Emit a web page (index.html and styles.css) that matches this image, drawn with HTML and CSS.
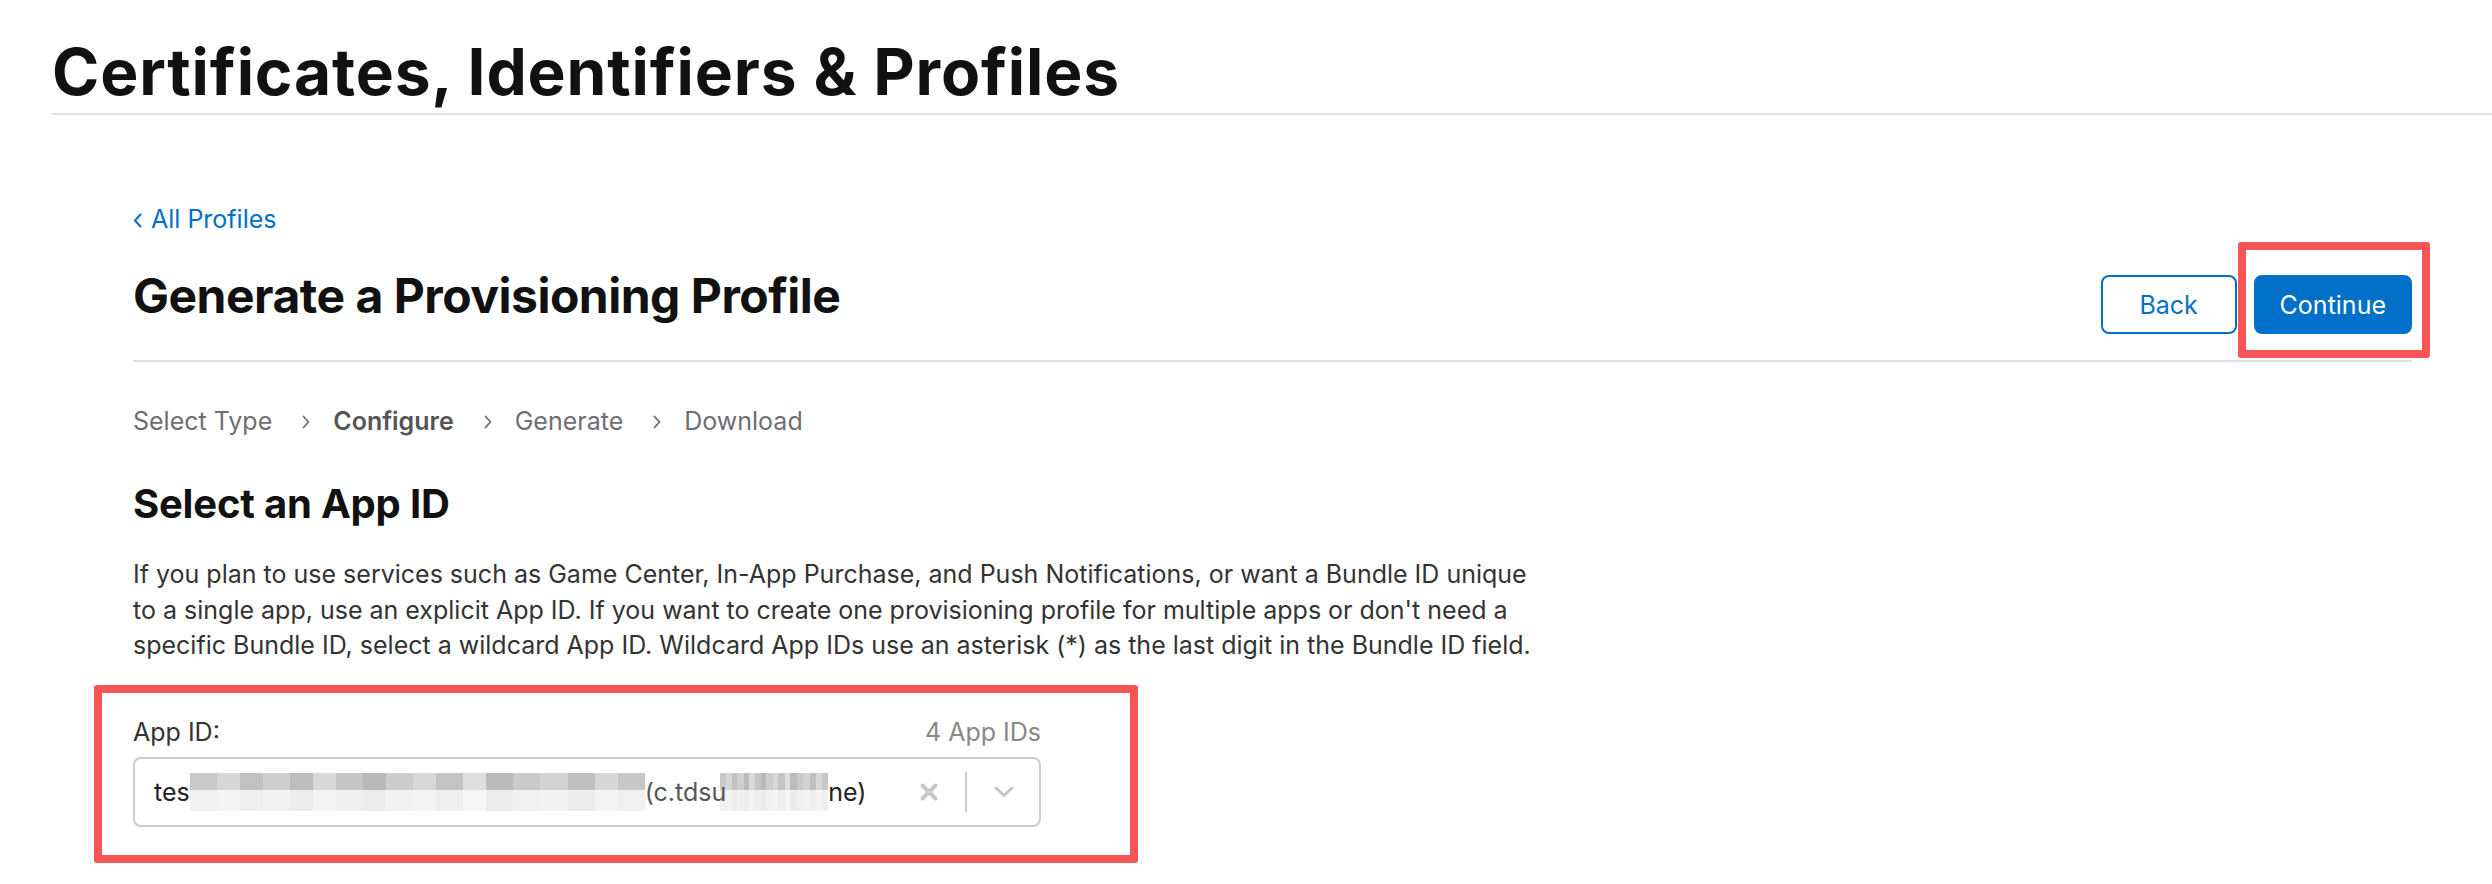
FILE: index.html
```html
<!DOCTYPE html>
<html lang="en">
<head>
<meta charset="utf-8">
<title>Certificates, Identifiers &amp; Profiles</title>
<link rel="stylesheet" href="styles.css">
</head>
<body>
<header class="site-header">
  <h1 class="site-title">Certificates, Identifiers &amp; Profiles</h1>
</header>
<main class="content">
  <a class="back-link" href="#">
    <svg class="back-chevron" width="9" height="15" viewBox="0 0 9 15"><path d="M7.5 1.5 L2 7.5 L7.5 13.5" fill="none" stroke="#0070c9" stroke-width="2" stroke-linecap="round" stroke-linejoin="round"/></svg>
    <span>All Profiles</span>
  </a>
  <div class="page-head">
    <h2 class="page-title">Generate a Provisioning Profile</h2>
    <div class="actions">
      <button class="btn btn-secondary">Back</button>
      <button class="btn btn-primary annotated">Continue</button>
    </div>
  </div>
  <ol class="steps">
    <li class="step">Select Type</li>
    <li class="step-sep"><svg width="8" height="14" viewBox="0 0 8 14"><path d="M1.5 1.5 L6.5 7 L1.5 12.5" fill="none" stroke="#6e6e73" stroke-width="1.8" stroke-linecap="round" stroke-linejoin="round"/></svg></li>
    <li class="step step-current">Configure</li>
    <li class="step-sep"><svg width="8" height="14" viewBox="0 0 8 14"><path d="M1.5 1.5 L6.5 7 L1.5 12.5" fill="none" stroke="#6e6e73" stroke-width="1.8" stroke-linecap="round" stroke-linejoin="round"/></svg></li>
    <li class="step">Generate</li>
    <li class="step-sep"><svg width="8" height="14" viewBox="0 0 8 14"><path d="M1.5 1.5 L6.5 7 L1.5 12.5" fill="none" stroke="#6e6e73" stroke-width="1.8" stroke-linecap="round" stroke-linejoin="round"/></svg></li>
    <li class="step">Download</li>
  </ol>
  <h3 class="section-title">Select an App ID</h3>
  <p class="section-desc">If you plan to use services such as Game Center, In-App Purchase, and Push Notifications, or want a Bundle ID unique to a single app, use an explicit App ID. If you want to create one provisioning profile for multiple apps or don't need a specific Bundle ID, select a wildcard App ID. Wildcard App IDs use an asterisk (*) as the last digit in the Bundle ID field.</p>
  <div class="field annotated-box">
    <div class="field-head">
      <label class="field-label">App ID:</label>
      <span class="field-count">4 App IDs</span>
    </div>
    <div class="select">
      <div class="select-value">tes<span class="mosaic mosaic-long"></span><span class="faded">(c.tdsu</span><span class="mosaic mosaic-short"></span>ne)</div>
      <svg class="select-clear" width="20" height="20" viewBox="0 0 20 20"><path d="M3.5 3.5 L16.5 16.5 M16.5 3.5 L3.5 16.5" fill="none" stroke="#c7c7c7" stroke-width="4" stroke-linecap="round"/></svg>
      <span class="select-divider"></span>
      <svg class="select-arrow" width="22" height="13" viewBox="0 0 22 13"><path d="M3 3 L11 10.5 L19 3" fill="none" stroke="#c7c7c7" stroke-width="3" stroke-linecap="round" stroke-linejoin="round"/></svg>
    </div>
  </div>
</main>
</body>
</html>
```
FILE: styles.css
```css
* { box-sizing: border-box; }
html, body { margin: 0; padding: 0; background: #fff; }
body {
  font-family: Inter, "Noto Sans", "Liberation Sans", sans-serif;
  color: #1d1d1f;
  width: 2492px;
}

.site-header {
  margin-left: 52px;
  padding-top: 40px;
  padding-bottom: 9px;
  border-bottom: 2px solid #e3e3e3;
}
.site-title {
  margin: 0;
  font-size: 64px;
  line-height: 64px;
  font-weight: 700;
  color: #111;
  letter-spacing: 0.85px;
}

.content {
  margin-left: 133px;
  width: 2279px;
  padding-bottom: 50px;
}

.back-link {
  display: inline-flex;
  align-items: center;
  gap: 9px;
  margin-top: 92px;
  font-size: 25px;
  line-height: 25px;
  color: #0070c9;
  text-decoration: none;
}
.back-chevron { display: block; margin-top: 2px; }

.page-head {
  display: flex;
  justify-content: space-between;
  align-items: flex-start;
  margin-top: 40px;
  padding-bottom: 26px;
  border-bottom: 2px solid #e0e0e0;
}
.page-title {
  margin: 0;
  font-size: 48px;
  line-height: 48px;
  font-weight: 700;
  color: #111;
  letter-spacing: -0.5px;
}
.actions {
  display: flex;
  gap: 17px;
  margin-top: 3px;
}
.btn {
  height: 59px;
  min-width: 136px;
  padding: 0 24px;
  border-radius: 8px;
  border: 2px solid #0070c9;
  font-family: inherit;
  font-size: 25px;
  cursor: pointer;
}
.btn-secondary { background: #fff; color: #0070c9; }
.btn-primary { background: #0070c9; color: #fff; min-width: 158px; }

.annotated { position: relative; }
.annotated::after {
  content: "";
  position: absolute;
  left: -18px;
  top: -35px;
  right: -20px;
  bottom: -26px;
  border: 8px solid #f55555;
  border-radius: 3px;
  pointer-events: none;
}

.steps {
  display: flex;
  align-items: center;
  list-style: none;
  margin: 47px 0 0;
  padding: 0;
  font-size: 25px;
  line-height: 25px;
  color: #6e6e73;
}
.step-current { font-weight: 600; color: #555; }
.step-sep { display: flex; margin: 0 23px 0 30px; }
.step-sep svg { display: block; }

.section-title {
  margin: 50px 0 0;
  font-size: 40px;
  line-height: 40px;
  font-weight: 700;
  color: #111;
  letter-spacing: -0.2px;
}
.section-desc {
  margin: 33px 0 0;
  width: 1410px;
  font-size: 25px;
  line-height: 35.5px;
  color: #333;
}

.field {
  width: 908px;
  margin-top: 56px;
}
.annotated-box { position: relative; }
.annotated-box::after {
  content: "";
  position: absolute;
  left: -39px;
  top: -35px;
  right: -97px;
  bottom: -36px;
  border: 8px solid #f55555;
  border-radius: 3px;
  pointer-events: none;
}
.field-head {
  display: flex;
  justify-content: space-between;
  align-items: baseline;
  font-size: 25px;
  line-height: 25px;
}
.field-label { color: #333; }
.field-count { color: #888; }

.select {
  display: flex;
  align-items: center;
  height: 70px;
  margin-top: 12px;
  padding: 0 24px 0 19px;
  border: 2px solid #cccccc;
  border-radius: 8px;
}
.select-value {
  flex: 1;
  display: flex;
  align-items: center;
  font-size: 25px;
  color: #222;
  white-space: nowrap;
}
.mosaic {
  display: inline-block;
  height: 38px;
  background:
    linear-gradient(to bottom, rgba(255,255,255,0) 0 45%, rgba(255,255,255,0.72) 45% 100%),
    linear-gradient(90deg,
      #c9c9c9 0 6%, #d6d6d6 6% 11%, #c2c2c2 11% 16%, #cfcfcf 16% 22%, #bdbdbd 22% 27%,
      #d9d9d9 27% 32%, #c6c6c6 32% 38%, #b9b9b9 38% 43%, #cdcdcd 43% 49%, #d8d8d8 49% 54%,
      #c4c4c4 54% 60%, #dedede 60% 65%, #bcbcbc 65% 71%, #cacaca 71% 77%, #d3d3d3 77% 83%,
      #c0c0c0 83% 89%, #d7d7d7 89% 94%, #c8c8c8 94% 100%);
}
.mosaic-long { width: 455px; }
.mosaic-short { width: 108px; margin-left: -6px; }
.faded { color: #444; opacity: 0.9; }

.select-clear { display: block; flex: none; }
.select-divider {
  flex: none;
  width: 2px;
  height: 40px;
  background: #cccccc;
  margin: 0 26px;
}
.select-arrow { display: block; flex: none; }
```
